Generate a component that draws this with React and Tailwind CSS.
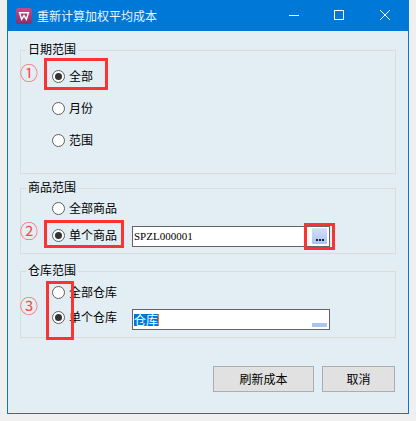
const cjk = { fontFamily: '"Noto Sans CJK SC", "Liberation Sans", sans-serif' };

function Radio({ checked }) {
  return (
    <span className="flex w-[13px] h-[13px] shrink-0 items-center justify-center rounded-full border border-[#5f5f5f] bg-white">
      {checked && <span className="block w-[7px] h-[7px] rounded-full bg-[#333333]" />}
    </span>
  );
}

function Option({ label, checked, className = "" }) {
  return (
    <div className={`flex items-center gap-[4px] h-[20px] text-[12px] leading-[20px] text-black ${className}`}>
      <Radio checked={checked} />
      <span>{label}</span>
    </div>
  );
}

function Group({ title, className, children }) {
  return (
    <div className={`relative border border-[#d9dcdc] pl-[31px] ${className}`}>
      <span className="absolute left-[5px] top-[-11px] bg-[#e3eef4] px-[2px] text-[12px] leading-[18px] text-black">{title}</span>
      {children}
    </div>
  );
}

function Mark({ className }) {
  return <div className={`absolute border-[3px] border-[#fb3333] ${className}`} />;
}

function Num({ children, className }) {
  return <span className={`absolute text-[18px] leading-[20px] text-[#fb4a4a] ${className}`}>{children}</span>;
}

export default function App() {
  return (
    <div className="relative w-[416px] h-[421px] overflow-hidden bg-[#f0f0f0] px-[7px]" style={cjk}>
      <div className="flex flex-col w-[402px] h-[414px] border-x border-b border-[#0078d7] bg-[#e3eef4]">
        <div className="flex items-center h-[31px] shrink-0 -mx-px bg-[#0078d7] pl-[9px] text-white">
          <svg width="16" height="16" viewBox="0 0 17 17" className="shrink-0">
            <defs>
              <linearGradient id="g" x1="0" y1="0" x2="0" y2="1">
                <stop offset="0" stopColor="#c8488c" />
                <stop offset="1" stopColor="#85306a" />
              </linearGradient>
            </defs>
            <rect width="17" height="17" rx="2.5" fill="url(#g)" />
            <path d="M3 5 H14 M4 6 L6 12 L8.5 8 L11 12 L13 6" fill="none" stroke="#fff" strokeWidth="1.5" />
          </svg>
          <span className="ml-[5px] text-[12px] leading-[18px] text-[#eaf4fc]">重新计算加权平均成本</span>
          <div className="ml-auto flex items-center">
            <svg width="46" height="31" viewBox="0 0 46 31"><path d="M18 15.5H28" stroke="#fff" strokeWidth="1" /></svg>
            <svg width="46" height="31" viewBox="0 0 46 31"><rect x="17.5" y="10.5" width="9" height="9" fill="none" stroke="#fff" strokeWidth="1" /></svg>
            <svg width="46" height="31" viewBox="0 0 46 31"><path d="M17 10L27 20M27 10L17 20" stroke="#fff" strokeWidth="1" /></svg>
          </div>
        </div>

        <div className="flex flex-col flex-1 pl-[12px] pr-[12px]">
          <Group title="日期范围" className="mt-[19px] h-[124px] flex flex-col pt-[15px] gap-[12px]">
            <Option label="全部" checked />
            <Option label="月份" />
            <Option label="范围" />
          </Group>

          <Group title="商品范围" className="mt-[14px] h-[66px] flex flex-col pt-[9px] gap-[8px]">
            <Option label="全部商品" />
            <div className="flex items-start">
              <Option label="单个商品" checked className="w-[81px] -mt-[1px]" />
              <div className="relative ml-[-1px] flex items-center w-[198px] h-[21px] border border-[#646464] bg-white pl-[1px] text-[11px] leading-[19px] text-black" style={{ fontFamily: '"Liberation Serif", serif' }}>
                SPZL000001
                <span className="absolute right-[2px] top-[1px] flex items-end justify-center w-[15px] h-[16px] rounded-[1px] bg-gradient-to-b from-[#d5e0f8] to-[#a9c1f2] pb-[3px]">
                  <span className="flex gap-[1px]">
                    <i className="block w-[2px] h-[2px] bg-[#222]" />
                    <i className="block w-[2px] h-[2px] bg-[#222]" />
                    <i className="block w-[2px] h-[2px] bg-[#222]" />
                  </span>
                </span>
              </div>
            </div>
          </Group>

          <Group title="仓库范围" className="mt-[17px] h-[67px] flex flex-col pt-[10px] gap-[7px]">
            <Option label="全部仓库" />
            <div className="flex items-start">
              <Option label="单个仓库" checked className="w-[81px] -mt-[2px]" />
              <div className="relative ml-[-1px] flex items-center w-[198px] h-[21px] border border-[#646464] bg-white pl-[1px] text-[12px] leading-[19px]">
                <span className="bg-[#0078d7] text-white border-r border-[#f07a1a] leading-[12px]">仓库</span>
                <span className="absolute right-[2px] bottom-[2px] block w-[15px] h-[4px] bg-[#abc4f3]" />
              </div>
            </div>
          </Group>

          <div className="mt-[28px] flex justify-end gap-[8px] pr-[1px]">
            <button className="w-[101px] h-[26px] border border-[#adadad] bg-[#e1e1e1] text-[12px] text-black">刷新成本</button>
            <button className="w-[73px] h-[26px] border border-[#adadad] bg-[#e1e1e1] text-[12px] text-black">取消</button>
          </div>
        </div>
      </div>

      <Mark className="left-[44px] top-[58px] w-[64px] h-[32px]" />
      <Mark className="left-[44px] top-[220px] w-[80px] h-[28px]" />
      <Mark className="left-[304px] top-[223px] w-[31px] h-[27px]" />
      <Mark className="left-[46px] top-[281px] w-[28px] h-[59px]" />
      <Num className="left-[20px] top-[62px]">①</Num>
      <Num className="left-[20px] top-[220px]">②</Num>
      <Num className="left-[20px] top-[295px]">③</Num>
    </div>
  );
}
